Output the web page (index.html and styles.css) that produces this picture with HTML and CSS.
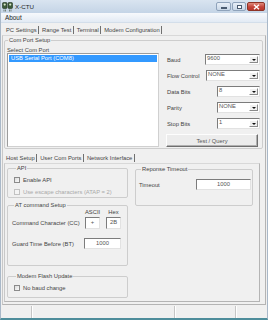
FILE: index.html
```html
<!DOCTYPE html>
<html>
<head>
<meta charset="utf-8">
<link rel="stylesheet" href="styles.css">
</head>
<body>
<div class="window">
  <div class="titlebar">
    <svg class="app-icon" width="11" height="10" viewBox="0 0 11 10">
      <rect x="0.5" y="0.5" width="4.5" height="6" rx="1" fill="#3c5a3a" stroke="#22331f" stroke-width="0.6"/>
      <rect x="6" y="0.5" width="4.5" height="6" rx="1" fill="#3c5a3a" stroke="#22331f" stroke-width="0.6"/>
      <circle cx="2.7" cy="2.6" r="1.1" fill="#d8e6c8"/>
      <circle cx="8.2" cy="2.6" r="1.1" fill="#d8e6c8"/>
      <path d="M2 7.5v2M3.5 7.5v2M7.5 7.5v2M9 7.5v2" stroke="#4a5a4a" stroke-width="0.7"/>
    </svg>
    <span class="title">X-CTU</span>
    <div class="controls">
      <span class="ctl ctl-min"><i></i></span>
      <span class="ctl ctl-max"><i></i></span>
      <span class="ctl ctl-close">
        <svg width="7" height="6" viewBox="0 0 7 6"><path d="M1 0.8L6 5.2M6 0.8L1 5.2" stroke="#fff" stroke-width="1.4"/></svg>
      </span>
    </div>
  </div>
  <div class="menubar"><span class="menu-item">About</span></div>
  <div class="tabs main-tabs">
    <span class="tab active">PC Settings</span>
    <span class="tab">Range Test</span>
    <span class="tab">Terminal</span>
    <span class="tab">Modem Configuration</span>
  </div>
  <div class="panel outer-panel">
    <fieldset class="group com-group">
      <legend>Com Port Setup</legend>
      <div class="com-body">
        <div class="com-left">
          <div class="caption">Select Com Port</div>
          <div class="listbox">
            <div class="list-item selected">USB Serial Port (COM8)</div>
          </div>
        </div>
        <div class="com-right">
          <div class="field"><span class="field-label">Baud</span><div class="select w-baud"><span class="val">9600</span><span class="arrow"></span></div></div>
          <div class="field"><span class="field-label">Flow Control</span><div class="select w-flow"><span class="val">NONE</span><span class="arrow"></span></div></div>
          <div class="field"><span class="field-label">Data Bits</span><div class="select w-small"><span class="val">8</span><span class="arrow"></span></div></div>
          <div class="field"><span class="field-label">Parity</span><div class="select w-small"><span class="val">NONE</span><span class="arrow"></span></div></div>
          <div class="field"><span class="field-label">Stop Bits</span><div class="select w-small"><span class="val">1</span><span class="arrow"></span></div></div>
          <div class="btn">Test / Query</div>
        </div>
      </div>
    </fieldset>
    <div class="tabs sub-tabs">
      <span class="tab active">Host Setup</span>
      <span class="tab">User Com Ports</span>
      <span class="tab">Network Interface</span>
    </div>
    <div class="panel inner-panel">
      <div class="col-left">
        <fieldset class="group api-group">
          <legend>API</legend>
          <div class="check-row"><span class="check"></span><span>Enable API</span></div>
          <div class="check-row disabled"><span class="check"></span><span>Use escape characters (ATAP = 2)</span></div>
        </fieldset>
        <fieldset class="group at-group">
          <legend>AT command Setup</legend>
          <div class="at-head"><span class="head-cell">ASCII</span><span class="head-cell">Hex</span></div>
          <div class="at-row cc-row">
            <span class="at-label">Command Character (CC)</span>
            <span class="input w-cc">+</span>
            <span class="input w-cc">2B</span>
          </div>
          <div class="at-row bt-row">
            <span class="at-label">Guard Time Before (BT)</span>
            <span class="input w-bt">1000</span>
          </div>
        </fieldset>
        <fieldset class="group flash-group">
          <legend>Modem Flash Update</legend>
          <div class="check-row"><span class="check"></span><span>No baud change</span></div>
        </fieldset>
      </div>
      <div class="col-right">
        <fieldset class="group timeout-group">
          <legend>Reponse Timeout</legend>
          <div class="timeout-row">
            <span class="at-label">Timeout</span>
            <span class="input w-timeout">1000</span>
          </div>
        </fieldset>
      </div>
    </div>
  </div>
  <div class="statusbar">
    <span class="cell c1"></span>
    <span class="cell c2"></span>
    <span class="cell c3"></span>
    <span class="cell c4"></span>
  </div>
</div>
</body>
</html>
```
FILE: styles.css
```css
* { box-sizing: border-box; }
html, body { margin: 0; padding: 0; }
body {
  width: 268px;
  height: 320px;
  overflow: hidden;
  font-family: "Liberation Sans", Arial, sans-serif;
  font-size: 5.8px;
  color: #444;
  background: #f0f0f0;
  white-space: nowrap;
}
.window {
  width: 268px;
  height: 320px;
  display: flex;
  flex-direction: column;
  background: #f0f0f0;
  border-left: 1px solid #a9b8c8;
  border-right: 1px solid #a9b8c8;
  border-bottom: 2px solid #4e8d9b;
}
/* title bar */
.titlebar {
  height: 13px;
  flex: none;
  display: flex;
  align-items: center;
  padding-left: 1px;
  background: linear-gradient(#d9e4f0, #c4d4e6);
}
.app-icon { flex: none; margin-right: 2px; }
.title { font-size: 6.2px; color: #1e1e1e; }
.controls {
  margin-left: auto;
  margin-right: 2px;
  display: flex;
  gap: 1px;
  align-self: flex-start;
  padding-top: 2px;
}
.ctl {
  height: 9px;
  border: 1px solid #8fa3bb;
  border-radius: 2px;
  display: flex;
  align-items: center;
  justify-content: center;
  background: linear-gradient(#e8eff7, #c9d7e7);
}
.ctl-min { width: 15px; }
.ctl-max { width: 14px; }
.ctl-close {
  width: 18px;
  border-color: #8e3326;
  background: linear-gradient(#e08c7e, #c5443a 55%, #b8382d);
}
.ctl-min i {
  width: 6px; height: 2px; margin-top: 3px;
  background: #fff; border: 0.5px solid #4a5b70;
}
.ctl-max i {
  width: 5px; height: 4px;
  border: 1px solid #4a5b70; border-top-width: 1.5px;
  background: #fff;
}
/* menu */
.menubar {
  height: 10px;
  flex: none;
  display: flex;
  align-items: center;
  padding-left: 4px;
  background: linear-gradient(#f7f9fc, #e2eaf4);
  border-bottom: 1px solid #d3deea;
}
.menu-item { font-size: 6.4px; color: #222; }
/* tabs */
.tabs {
  flex: none;
  display: flex;
  align-items: flex-end;
}
.main-tabs { height: 12px; padding-left: 2px; padding-bottom: 1px; }
.sub-tabs { height: 11px; margin-top: 3px; padding-bottom: 1px; }
.tab {
  padding: 0 1.5px 0 3px;
  line-height: 8px;
  border-right: 1px solid #707070;
  color: #444;
}
/* panels */
.panel {
  border: 1px solid #b4b4b4;
  border-top-color: #d8d8d8;
  border-left-color: #c8c8c8;
}
.outer-panel {
  flex: 1;
  margin: 0 1px;
  display: flex;
  flex-direction: column;
  min-height: 0;
}
.group {
  margin: 0;
  border: 1px solid #cdcdcd;
  border-radius: 2px;
  min-width: 0;
}
.group legend {
  padding: 0 1px;
  margin-left: 2px;
  line-height: 7px;
  color: #444;
}
.com-group {
  margin: 1px 2px 0 1px;
  padding: 0 2px 1px 1px;
}
.com-body { display: flex; }
.com-left { padding-top: 3px; margin-left: 1px; }
.caption { line-height: 6px; }
.listbox {
  width: 152px;
  height: 94px;
  background: #fff;
  border: 1px solid #9c9c9c;
  border-right-color: #d0d0d0;
  border-bottom-color: #d0d0d0;
  padding: 1px;
}
.list-item { height: 7px; line-height: 7px; padding-left: 2px; }
.list-item.selected { background: #3399ff; color: #fff; }
.com-right {
  margin-left: auto;
  width: 94px;
  padding-top: 10px;
  display: flex;
  flex-direction: column;
}
.field {
  display: flex;
  align-items: center;
  height: 11px;
  margin-bottom: 5px;
}
.field-label { padding-left: 1px; }
.select {
  margin-left: auto;
  height: 11px;
  display: flex;
  align-items: flex-start;
  background: #fff;
  border: 1px solid;
  border-color: #7c7c7c #e2e2e2 #e2e2e2 #7c7c7c;
  padding: 0 1px 0 1px;
}
.w-baud { width: 55px; }
.w-flow { width: 54px; }
.w-small { width: 43px; }
.val { flex: 1; line-height: 7px; color: #555; }
.arrow {
  width: 9px;
  height: 7px;
  margin-top: 1px;
  background: #f0f0f0;
  border: 1px solid;
  border-color: #fff #8a8a8a #8a8a8a #fff;
  display: flex;
  align-items: center;
  justify-content: center;
}
.arrow::after {
  content: "";
  border-left: 2px solid transparent;
  border-right: 2px solid transparent;
  border-top: 2px solid #111;
}
.btn {
  width: 92px;
  height: 13px;
  display: flex;
  align-items: center;
  justify-content: center;
  background: #ececec;
  border: 1px solid;
  border-color: #fdfdfd #6e6e6e #6e6e6e #fdfdfd;
  box-shadow: inset -1px -1px 0 #b0b0b0;
  color: #555;
}
/* inner tab panel */
.inner-panel {
  flex: 1;
  margin: 0 5px 2px 1px;
  padding-left: 2px;
  display: flex;
  align-items: flex-start;
}
.col-left { width: 121px; display: flex; flex-direction: column; }
.col-right { width: 118px; margin-left: 7px; }
.api-group { margin-top: 1px; padding: 4px 0 0 6px; height: 33px; }
.check-row {
  display: flex;
  align-items: center;
  height: 8px;
  margin-bottom: 4px;
  gap: 3px;
}
.check {
  width: 6px;
  height: 6px;
  border: 1px solid #8b8b8b;
  background: linear-gradient(135deg, #dcdcdc, #fafafa);
}
.check-row.disabled { color: #a9a9a9; }
.check-row.disabled .check { border-color: #c2c2c2; background: #f4f4f4; }
.at-group { margin-top: 4px; padding: 0 6px 0 4px; height: 64px; }
.at-head { display: flex; justify-content: flex-end; gap: 6px; height: 6px; line-height: 6px; }
.head-cell { width: 15px; text-align: center; }
.at-row { display: flex; align-items: center; gap: 6px; }
.cc-row { margin-top: 2px; height: 12px; }
.bt-row { margin-top: 9px; height: 11px; }
.at-label { flex: 1; min-width: 0; }
.input {
  flex: none;
  height: 100%;
  display: flex;
  align-items: flex-start;
  justify-content: center;
  line-height: 8px;
  background: #fff;
  border: 1px solid;
  border-color: #7c7c7c #e2e2e2 #e2e2e2 #7c7c7c;
  color: #555;
}
.w-cc { width: 15px; }
.w-bt { width: 37px; }
.flash-group { margin-top: 7px; padding: 4px 0 0 6px; height: 25px; }
.timeout-group { margin-top: 2px; padding: 6px 1px 0 3px; height: 40px; }
.timeout-row { display: flex; align-items: center; height: 11px; }
.w-timeout { width: 55px; }
/* status bar */
.statusbar {
  height: 13px;
  flex: none;
  display: flex;
  padding-top: 1px;
}
.cell {
  height: 12px;
  border-right: 1px solid #c6c6c6;
  box-shadow: 1px 0 0 #fff;
}
.c1 { width: 31px; }
.c2 { width: 143px; }
.c3 { width: 61px; }
.c4 { flex: 1; border-right: none; box-shadow: none; }
```
